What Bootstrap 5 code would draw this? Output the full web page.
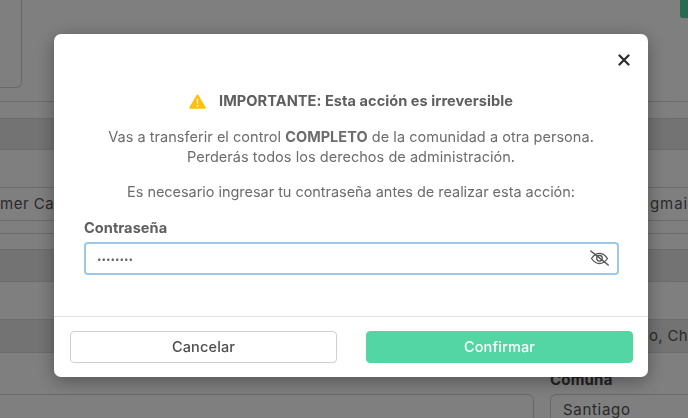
<!DOCTYPE html>
<html lang="es">
<head>
<meta charset="utf-8">
<link href="https://cdn.jsdelivr.net/npm/bootstrap@5.3.0/dist/css/bootstrap.min.css" rel="stylesheet">
<style>
html,body{height:418px;overflow:hidden}
body{font-family:"Inter","Noto Sans",sans-serif;background:#fff;color:#212529}
.page-under{height:418px;overflow:hidden;display:flex;flex-direction:column;color:#555;font-size:15px;letter-spacing:.5px}
.under-top{height:88px;flex:none}
.save-chip{width:8px;height:18px;background:#53d6a4;border-radius:0 0 0 3px}
.top-box{width:22px;height:88px;border:1px solid #d0d0d0;border-top:0;border-left:0;border-radius:0 0 6px 0}
.under-row{flex:none;border-bottom:1px solid #d8d8d8;white-space:nowrap;line-height:32px;overflow:hidden}
.under-row.shade{background:#e6e6e6}
.h14{height:14px}.h17{height:17px}.h31{height:31px}.h38{height:38px}.h33{height:33px}.h13{height:13px}.h16{height:16px}.h32{height:32px}
.gmail-end{letter-spacing:.9px}
.city-end{letter-spacing:.35px}
.comuna-title{font-weight:700;color:#444;margin:17px 0 4px 550px;line-height:20px;letter-spacing:.2px;flex:none}
.comuna-row{gap:16px;height:40px;flex:none}
.comuna-left{width:534px;border:1px solid #d0d0d0;border-left:0;border-radius:0 6px 0 0}
.comuna-box{flex:1;border:1px solid #d0d0d0;border-right:0;border-radius:6px 0 0 0;padding:4px 12px;line-height:22px;letter-spacing:.7px}
.modal-backdrop.show{opacity:.5}
.dlg.modal-dialog{max-width:594px;width:594px;margin:34px 0 0 54px}
.dlg .modal-content{border:0;border-radius:7px;box-shadow:0 4px 18px rgba(0,0,0,.35);height:343px}
.dlg .btn-close{position:absolute;top:20px;right:18px;width:12px;height:12px;padding:0;opacity:1;background:none}
.dlg .modal-body{padding:57px 30px 0;color:#6c6c6c;font-size:14.5px;line-height:20px;text-align:center;height:282px;flex:none;letter-spacing:.04px}
.warn-line{font-weight:700;color:#5f5f5f;font-size:14.6px;line-height:20px;margin-bottom:16px;gap:13px}
.dlg p{margin:0}
.dlg .gap-line{margin-top:15px;letter-spacing:-.04px}
.pw-label{display:block;text-align:left;font-weight:700;color:#5f5f5f;font-size:14.6px;margin:16px 0 4px;line-height:20px}
.pw-wrap{height:33px;margin-right:-1px}
.pw-wrap .form-control{height:33px;padding:0 40px 0 11px;border:2px solid #9dc8ea;border-radius:4px;font-size:8px;color:#666;box-shadow:none}
.pw-eye{position:absolute;right:10px;top:8px;width:19px;height:16px}
.dlg .modal-footer{padding:14px 15px 0;border-top:1px solid #dee2e6;flex-wrap:nowrap;gap:29px;align-items:flex-start;display:flex}
.dlg .modal-footer .btn{margin:0;flex:1 1 0;height:32px;padding:0;font-size:14.5px;font-weight:500;border-radius:4px;line-height:30px;letter-spacing:.15px}
.dlg .modal-footer .btn-cancel{margin-left:1px;background:#fff;border:1px solid #cfcfcf;color:#4d4d4d}
.btn-ok{background:#53d6a4;border:1px solid #53d6a4;color:#fff}
</style>
</head>
<body>
<div class="page-under">
  <div class="under-top d-flex justify-content-between">
    <div class="top-box"></div>
    <div class="save-chip"></div>
  </div>
  <div class="under-row h14"></div>
  <div class="under-row h17"></div>
  <div class="under-row shade h31"></div>
  <div class="under-row h38"></div>
  <div class="under-row h33 d-flex justify-content-between"><span>mer Ca</span><span class="gmail-end">gmai</span></div>
  <div class="under-row h13"></div>
  <div class="under-row h16"></div>
  <div class="under-row shade h32"></div>
  <div class="under-row h38"></div>
  <div class="under-row shade h33 d-flex justify-content-end"><span class="city-end">go, Ch</span></div>
  <div class="comuna-title">Comuna</div>
  <div class="comuna-row d-flex">
    <div class="comuna-left"></div>
    <div class="comuna-box">Santiago</div>
  </div>
</div>
<div class="modal-backdrop show"></div>
<div class="modal show d-block" tabindex="-1">
  <div class="modal-dialog dlg">
    <div class="modal-content">
      <button type="button" class="btn-close" aria-label="Cerrar">
        <svg viewBox="0 0 12 12" width="12" height="12" class="d-block"><path d="M1.500 1.500l9 9M10.500 1.500l-9 9" stroke="#2b2b2b" stroke-width="2.200" stroke-linecap="round" fill="none"/></svg>
      </button>
      <div class="modal-body">
        <div class="warn-line d-flex justify-content-center align-items-center">
          <svg width="17" height="15" viewBox="0 0 17 15"><path d="M8.500.5a1 1 0 0 1 .9.5l7.200 12.300a1 1 0 0 1-.9 1.500H1.300a1 1 0 0 1-.9-1.500L7.600 1a1 1 0 0 1 .9-.5z" fill="#fdc010"/><path d="M7.700 4.800h1.600l-.2 5H7.900zM7.700 11h1.600v1.600H7.700z" fill="#fff6d6"/></svg>
          <span>IMPORTANTE: Esta acción es irreversible</span>
        </div>
        <p>Vas a transferir el control <b>COMPLETO</b> de la comunidad a otra persona.</p>
        <p>Perderás todos los derechos de administración.</p>
        <p class="gap-line">Es necesario ingresar tu contraseña antes de realizar esta acción:</p>
        <label class="pw-label" for="pw">Contraseña</label>
        <div class="position-relative pw-wrap">
          <input id="pw" class="form-control" type="password" value="password">
          <svg class="pw-eye" viewBox="0 0 19 16" fill="none" stroke="#555" stroke-width="1.300" stroke-linecap="round"><path d="M1.500 8.500C3.800 5 6.400 3.300 9.500 3.300s5.700 1.700 8 5.200c-2.300 3.300-4.900 5-8 5s-5.700-1.700-8-5z"/><circle cx="9.500" cy="8.300" r="2.800"/><path d="M.8 1l17.400 14" stroke-width="1.500"/></svg>
        </div>
      </div>
      <div class="modal-footer">
        <button type="button" class="btn btn-cancel">Cancelar</button>
        <button type="button" class="btn btn-ok">Confirmar</button>
      </div>
    </div>
  </div>
</div>
<script src="https://cdn.jsdelivr.net/npm/bootstrap@5.3.0/dist/js/bootstrap.bundle.min.js"></script>
</body>
</html>
